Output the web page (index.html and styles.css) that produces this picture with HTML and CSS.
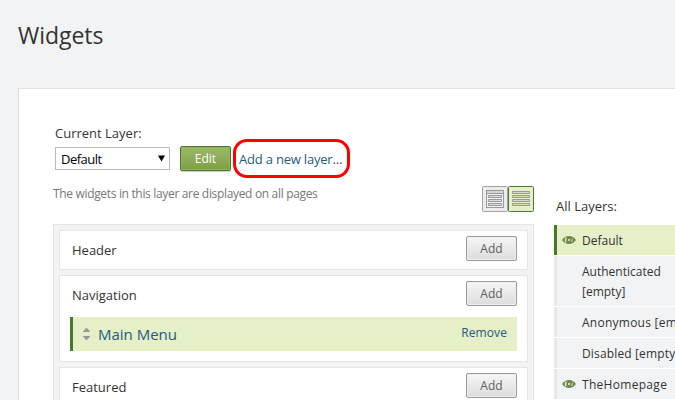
FILE: index.html
```html
<!DOCTYPE html>
<html lang="en">
<head>
<meta charset="utf-8">
<title>Widgets</title>
<link rel="stylesheet" href="styles.css">
</head>
<body>
<h1 class="title">Widgets</h1>
<main class="panel">
  <section class="main">
    <div class="label current-label">Current Layer:</div>
    <div class="controls">
      <div class="select"><span class="select-text">Default</span><svg width="7" height="7" viewBox="0 0 7 7"><path d="M0 0.5H7L3.5 6.5Z" fill="#000"/></svg></div>
      <button class="btn edit"><span>Edit</span></button>
      <div class="ring"><a class="new-layer">Add a new layer...</a></div>
    </div>
    <div class="info">
      <p class="desc">The widgets in this layer are displayed on all pages</p>
      <div class="toggle">
        <svg width="26" height="26" viewBox="0 0 26 26"><rect x=".5" y=".5" width="25" height="25" rx="1" fill="#ececec" stroke="#a2a2a2"/><rect x="4.5" y="4.5" width="17" height="17" fill="#f1f1f1" stroke="#999"/><path d="M5 5h16v2H5z" fill="#d2d6d2"/><path d="M4 7.500h18" stroke="#999"/><g fill="#ddd" stroke="#999"><path d="M6.500 9.500h13v2h-13zM6.500 13.500h13v2h-13zM6.500 17.500h13v2h-13z"/></g></svg><svg width="26" height="26" viewBox="0 0 26 26"><rect x=".5" y=".5" width="25" height="25" rx="1" fill="#e5efcb" stroke="#4a782a"/><g fill="#d5dac8" stroke="#999"><path d="M4.500 5.500h17v2h-17zM4.500 9.500h17v2h-17zM4.500 13.500h17v2h-17zM4.500 17.500h17v2h-17z"/></g></svg>
      </div>
    </div>
    <div class="zones">
      <div class="zone"><div class="zone-head"><span>Header</span><button class="btn add">Add</button></div></div>
      <div class="zone nav"><div class="zone-head"><span>Navigation</span><button class="btn add">Add</button></div>
        <div class="widget"><svg width="9" height="14" viewBox="0 0 9 14"><path d="M0.500 5L4.500 0.500L8.500 5ZM0.500 9H8.500L4.500 13.500Z" fill="#999"/></svg><a class="widget-name">Main Menu</a><a class="remove">Remove</a></div>
      </div>
      <div class="zone"><div class="zone-head"><span>Featured</span><button class="btn add">Add</button></div></div>
    </div>
  </section>
  <aside class="layers">
    <div class="label all-label">All Layers:</div>
    <ul>
      <li class="active"><svg class="eye" width="14" height="8" viewBox="0 0 14 8"><path fill="#6f8745" d="M0 4Q3 0 7 0T14 4Q11 8 7 8T0 4Z"/><circle cx="7" cy="4" r="3.200" fill="none" stroke="#e5efc8" stroke-width=".9" stroke-dasharray="4 6.050" stroke-dashoffset="2"/><path d="M3.800 1.600Q2.400 4 3.800 6.400" fill="none" stroke="#e5efc8" stroke-width=".9"/><circle cx="7" cy="4" r="1.100" fill="#e5efc8"/></svg><span>Default</span></li>
      <li><span>Authenticated<br>[empty]</span></li>
      <li><span class="anonymous">Anonymous [empty]</span></li>
      <li><span class="disabled">Disabled [empty]</span></li>
      <li><svg class="eye" width="14" height="8" viewBox="0 0 14 8"><path fill="#6f8745" d="M0 4Q3 0 7 0T14 4Q11 8 7 8T0 4Z"/><circle cx="7" cy="4" r="3.200" fill="none" stroke="#f2f3f5" stroke-width=".9" stroke-dasharray="4 6.050" stroke-dashoffset="2"/><path d="M3.800 1.600Q2.400 4 3.800 6.400" fill="none" stroke="#f2f3f5" stroke-width=".9"/><circle cx="7" cy="4" r="1.100" fill="#f2f3f5"/></svg><span class="homepage">TheHomepage</span></li>
    </ul>
  </aside>
</main>
</body>
</html>
```

FILE: styles.css
```css
* { box-sizing: border-box; }
html, body { height: 100%; }
body {
  margin: 0;
  overflow: hidden;
  background: #f2f3f5;
  color: #333;
  font: 13px/20px "Open Sans", "Noto Sans", sans-serif;
  white-space: nowrap;
}
.title {
  margin: 0;
  height: 88px;
  padding: 19px 0 0 18px;
  font-size: 23px;
  line-height: 32px;
  font-weight: 400;
  letter-spacing: -0.05px;
}
.panel {
  display: flex;
  height: 312px;
  margin-left: 18px;
  padding-left: 34px;
  overflow: hidden;
  border: 1px solid #dfe2e4;
  border-width: 1px 0 0 1px;
  background: #fff;
}
.main { width: 481px; flex: none; }
.label { font-size: 13px; }
.current-label { margin: 34px 0 0 2px; }
.controls { display: flex; align-items: flex-start; height: 40px; margin-top: -4px; padding-left: 2px; }
.select {
  display: flex;
  align-items: center;
  justify-content: space-between;
  width: 115px;
  height: 23px;
  margin-top: 8px;
  padding: 0 4px 0 5px;
  border: 1px solid #bababa;
  color: #000;
}
.select svg { margin-top: -1px; }
.select-text { letter-spacing: -0.5px; padding-top: 1px; }
.btn {
  padding: 0;
  border-radius: 2px;
  width: 51px;
  height: 25px;
  font: 12px/22px "Open Sans", "Noto Sans", sans-serif;
  text-align: center;
}
.edit {
  margin: 7px 0 0 10px;
  border: 1px solid #4a782a;
  background: linear-gradient(#9cb96a, #7e9f45);
  box-shadow: inset 0 0 0 1px #94b15f, 0 1px 1px #ccc;
  color: #fff;
}
.ring {
  width: 117px;
  height: 39px;
  margin-left: 2px;
  padding: 7px 0 0 3px;
  border: 3px solid #f00;
  border-radius: 14px;
}
a { color: #245c80; }
.new-layer { letter-spacing: -0.2px; }
.info { display: flex; justify-content: space-between; height: 45px; padding-top: 4px; }
.desc { margin: 1px 0 0; font-size: 12px; color: #777; letter-spacing: -0.33px; }
.toggle { display: flex; margin-top: 3px; }
.zones {
  height: 220px;
  padding: 5px;
  border: 1px solid #e2e4e6;
  background: #f2f3f5;
}
.zone {
  height: 40px;
  margin-bottom: 5px;
  padding: 5px 10px 0;
  border: 1px solid #e4e6e8;
  background: #fff;
}
.zone.nav { height: 87px; }
.zone-head { display: flex; justify-content: space-between; padding-left: 2px; line-height: 28px; }
.add {
  border: 1px solid #999;
  background: linear-gradient(#f6f6f6, #dcdcdc);
  box-shadow: inset 0 0 0 1px #f0f0f0;
  color: #606060;
}
.widget {
  display: flex;
  align-items: center;
  height: 34px;
  margin-top: 8px;
  padding: 0 10px 0 9px;
  border-left: 3px solid #4a782a;
  background: #e5efc8;
}
.widget-name { margin-left: 7px; margin-top: -1px; font-size: 15px; }
.remove { margin-left: auto; margin-top: -2px; font-size: 12px; letter-spacing: 0.1px; }
.layers { flex: 1; min-width: 0; margin-left: 20px; }
.all-label { margin: 107px 0 0 2px; }
.layers ul { margin: 9px 0 0; padding: 0; list-style: none; }
.layers li {
  position: relative;
  margin-bottom: 1px;
  padding: 6px 0 4px 25px;
  border-left: 3px solid #e8e9ea;
  background: #f2f3f5;
  font-size: 12px;
}
.layers li.active { border-color: #4a782a; background: #e5efc8; }
.anonymous { letter-spacing: 0.25px; }
.disabled { letter-spacing: 0.15px; }
.homepage { letter-spacing: 0.3px; }
.eye { position: absolute; left: 5px; top: 11px; }
```
